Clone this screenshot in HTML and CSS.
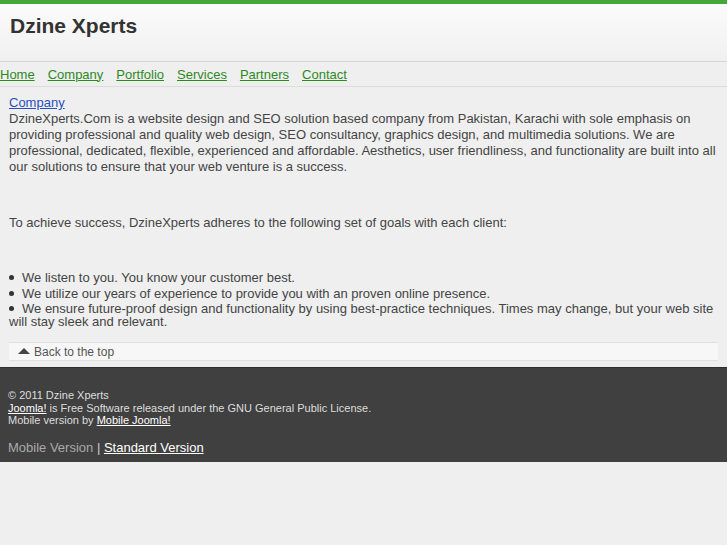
FILE: index.html
```html
<!DOCTYPE html>
<html>
<head>
<meta charset="utf-8">
<link rel="stylesheet" href="styles.css">
</head>
<body>
<div class="topbar"></div>
<div class="header"><h1 class="title">Dzine Xperts</h1></div>
<div class="nav">
  <a href="#">Home</a><a href="#">Company</a><a href="#">Portfolio</a><a href="#">Services</a><a href="#">Partners</a><a href="#">Contact</a>
</div>
<div class="content">
  <a class="crumb" href="#">Company</a>
  <p class="para">DzineXperts.Com is a website design and SEO solution based company from Pakistan, Karachi with sole emphasis on providing professional and quality web design, SEO consultancy, graphics design, and multimedia solutions. We are professional, dedicated, flexible, experienced and affordable. Aesthetics, user friendliness, and functionality are built into all our solutions to ensure that your web venture is a success.</p>
  <p class="para gap">To achieve success, DzineXperts adheres to the following set of goals with each client:</p>
  <ul class="goals">
    <li>We listen to you. You know your customer best.</li>
    <li>We utilize our years of experience to provide you with an proven online presence.</li>
    <li>We ensure future-proof design and functionality by using best-practice techniques. Times may change, but your web site will stay sleek and relevant.</li>
  </ul>
  <div class="backtop"><span class="arrow"></span>Back to the top</div>
</div>
<div class="footer">
  <div class="small">© 2011 Dzine Xperts<br><a href="#">Joomla!</a> is Free Software released under the GNU General Public License.<br>Mobile version by <a href="#">Mobile Joomla!</a></div>
  <div class="versions"><span class="muted">Mobile Version</span> | <a href="#">Standard Version</a></div>
</div>
</body>
</html>
```
FILE: styles.css
```css
html, body { margin: 0; padding: 0; }
body {
  background: #efefef;
  font-family: "Liberation Sans", Arial, sans-serif;
  font-size: 13px;
  color: #444;
}
.topbar { height: 4px; background: #46a83a; }
.header {
  height: 57px;
  background: linear-gradient(#fbfbfb, #f0f0f0);
  border-bottom: 1px solid #d6d6d6;
  display: flex;
  align-items: center;
  padding-left: 10px;
}
.title {
  margin: 0 0 13px 0;
  font-size: 21px;
  font-weight: bold;
  color: #333;
}
.nav {
  height: 23px;
  display: flex;
  align-items: center;
  gap: 13px;
  border-bottom: 1px solid #dcdcdc;
  padding-top: 1px;
}
.nav a { color: #2b8a1c; text-decoration: underline; line-height: 16px; }
.content { padding: 8px 9px 6px 9px; }
.crumb { color: #2a50c0; line-height: 16px; display: block; }
.para { margin: 0; line-height: 16px; }
.gap { margin-top: 40px; }
.goals {
  margin: 40px 0 0 0;
  padding: 0;
  list-style: none;
}
.goals li { line-height: 13px; margin-bottom: 2.5px; }
.goals li::before {
  content: "";
  display: inline-block;
  width: 5px;
  height: 5px;
  border-radius: 50%;
  background: #333;
  margin: 0 8px 2px 0;
  vertical-align: middle;
}
.backtop {
  margin-top: 14px;
  height: 17px;
  background: #f7f7f7;
  border-top: 1px solid #e0e0e0;
  border-bottom: 1px solid #e0e0e0;
  display: flex;
  align-items: center;
  padding-left: 9px;
  font-size: 12px;
  color: #555;
}
.arrow {
  width: 0; height: 0;
  border-left: 6px solid transparent;
  border-right: 6px solid transparent;
  border-bottom: 6px solid #444;
  margin-right: 4px;
  margin-bottom: 2px;
}
.footer {
  background: #404040;
  border-top: 1px solid #2e2e2e;
  padding: 21px 8px 6px 8px;
  color: #ddd;
}
.small { font-size: 11px; line-height: 12.5px; }
.footer a { color: #fff; text-decoration: underline; }
.versions { margin-top: 13px; font-size: 13px; line-height: 16px; color: #ccc; }
.muted { color: #aaa; }
```
